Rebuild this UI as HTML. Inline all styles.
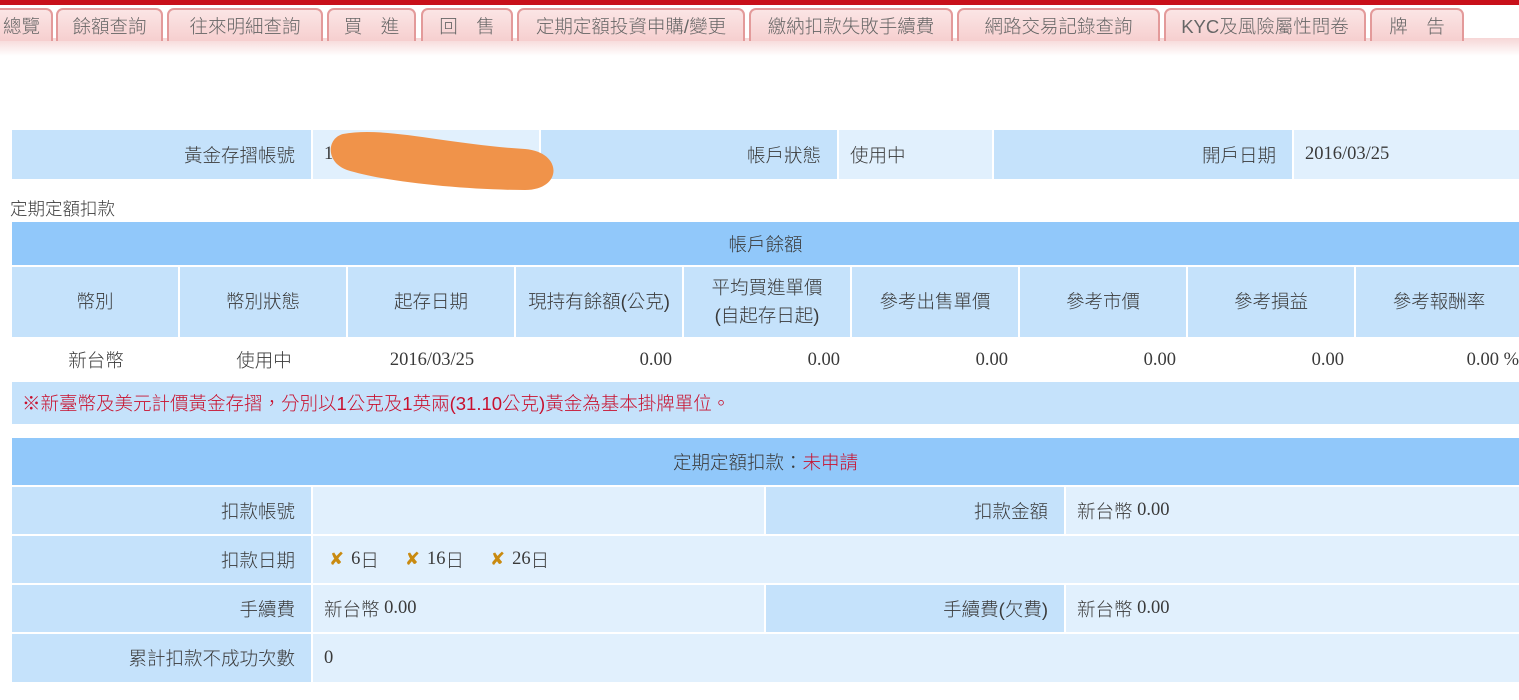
<!DOCTYPE html><html><head><meta charset="utf-8"><style>
*{margin:0;padding:0;box-sizing:border-box}
body{width:1519px;height:700px;overflow:hidden;background:#fff;position:relative;font-family:"Liberation Serif","Noto Sans CJK TC",serif;font-size:18.5px;color:#3a3a3a}
.cj{font-family:"Liberation Sans","Noto Sans CJK TC",sans-serif;font-weight:300}
.b{position:absolute;display:flex;align-items:center;white-space:nowrap}
.h{background:#91c8fa}.l{background:#c5e2fb}.v{background:#e1f0fd}
.r{justify-content:flex-end;padding-right:16px}.c{justify-content:center}.p{padding-left:11px}
.tab{position:absolute;top:8px;height:33px;border:2px solid #e39a9a;border-bottom:none;border-radius:7px 7px 0 0;background:linear-gradient(#fbe5e5,#f6cfcf);display:flex;align-items:center;justify-content:center;color:#666;font-family:"Liberation Sans","Noto Sans CJK TC",sans-serif;font-size:18.5px;font-weight:300}
.x{color:#c98a10;font-weight:bold;font-family:"DejaVu Sans",sans-serif;font-size:18px;margin-right:7px}
</style></head><body>
<div style="position:absolute;left:0;top:0;width:1519px;height:5px;background:#c8101a"></div>
<div style="position:absolute;left:0;top:38px;width:1519px;height:18px;background:linear-gradient(#f6d6d6,#fff)"></div>
<div class="tab" style="left:-10px;width:63px">總覽</div>
<div class="tab" style="left:56px;width:107px">餘額查詢</div>
<div class="tab" style="left:167px;width:156px">往來明細查詢</div>
<div class="tab" style="left:327px;width:89px">買　進</div>
<div class="tab" style="left:421px;width:92px">回　售</div>
<div class="tab" style="left:517px;width:228px">定期定額投資申購/變更</div>
<div class="tab" style="left:749px;width:204px">繳納扣款失敗手續費</div>
<div class="tab" style="left:957px;width:203px">網路交易記錄查詢</div>
<div class="tab" style="left:1164px;width:202px">KYC及風險屬性問卷</div>
<div class="tab" style="left:1370px;width:94px">牌　告</div>

<div class="b l r cj" style="left:12px;top:130px;width:299px;height:49px">黃金存摺帳號</div>
<div class="b v p" style="left:313px;top:130px;width:226px;height:49px">1</div>
<div class="b l r cj" style="left:541px;top:130px;width:296px;height:49px">帳戶狀態</div>
<div class="b v p cj" style="left:839px;top:130px;width:153px;height:49px">使用中</div>
<div class="b l r cj" style="left:994px;top:130px;width:298px;height:49px">開戶日期</div>
<div class="b v p" style="left:1294px;top:130px;width:225px;height:49px">2016/03/25</div>
<svg style="position:absolute;left:325px;top:122px" width="240" height="75"><path d="M18 12 C60 4,120 22,200 27 C238 30,238 68,200 68 C140 68,60 60,22 48 C0 40,2 16,18 12Z" fill="#f0934a"/></svg>

<div class="b cj" style="left:10px;top:196px;height:24px;font-size:17.5px">定期定額扣款</div>
<div class="b h c cj" style="left:12px;top:222px;width:1507px;height:43px">帳戶餘額</div>
<div id="cols"></div>
<div class="b l cj" style="left:12px;top:382px;width:1507px;height:42px;padding-left:10px;color:#c8102e;font-size:18.5px">※新臺幣及美元計價黃金存摺，分別以1公克及1英兩(31.10公克)黃金為基本掛牌單位。</div>

<div class="b h c cj" style="left:12px;top:438px;width:1507px;height:47px">定期定額扣款：<span style="color:#c8102e">未申請</span></div>
<div class="b l r cj" style="left:12px;top:487px;width:299px;height:47px">扣款帳號</div>
<div class="b v" style="left:313px;top:487px;width:451px;height:47px"></div>
<div class="b l r cj" style="left:766px;top:487px;width:298px;height:47px">扣款金額</div>
<div class="b v p" style="left:1066px;top:487px;width:453px;height:47px"><span class="cj">新台幣</span>&nbsp;0.00</div>
<div class="b l r cj" style="left:12px;top:536px;width:299px;height:47px">扣款日期</div>
<div class="b v p" style="left:313px;top:536px;width:1206px;height:47px;padding-left:16px"><span class="x">✘</span>6<span class="cj">日</span><span style="width:26px"></span><span class="x">✘</span>16<span class="cj">日</span><span style="width:26px"></span><span class="x">✘</span>26<span class="cj">日</span></div>
<div class="b l r cj" style="left:12px;top:585px;width:299px;height:47px">手續費</div>
<div class="b v p" style="left:313px;top:585px;width:451px;height:47px"><span class="cj">新台幣</span>&nbsp;0.00</div>
<div class="b l r cj" style="left:766px;top:585px;width:298px;height:47px">手續費(欠費)</div>
<div class="b v p" style="left:1066px;top:585px;width:453px;height:47px"><span class="cj">新台幣</span>&nbsp;0.00</div>
<div class="b l r cj" style="left:12px;top:634px;width:299px;height:48px">累計扣款不成功次數</div>
<div class="b v p" style="left:313px;top:634px;width:1206px;height:48px">0</div>
<script>
var h=["幣別","幣別狀態","起存日期","現持有餘額(公克)","平均買進單價<br>(自起存日起)","參考出售單價","參考市價","參考損益","參考報酬率"];
var d=["新台幣","使用中","2016/03/25","0.00","0.00","0.00","0.00","0.00","0.00 %"];
var s="";for(var i=0;i<9;i++){var x=12+i*168;
s+='<div class="b l c cj" style="left:'+x+'px;top:267px;width:166px;height:70px;text-align:center;line-height:28px">'+h[i]+'</div>';
var cls=i<3?'c':'r';var st=i<3?'':'padding-right:12px;';if(i==8)st='padding-right:5px;';
s+='<div class="b '+cls+(i<2?' cj':'')+'" style="left:'+x+'px;top:338px;width:168px;height:44px;'+st+'">'+d[i]+'</div>';}
document.getElementById('cols').outerHTML=s;
</script>
</body></html>
